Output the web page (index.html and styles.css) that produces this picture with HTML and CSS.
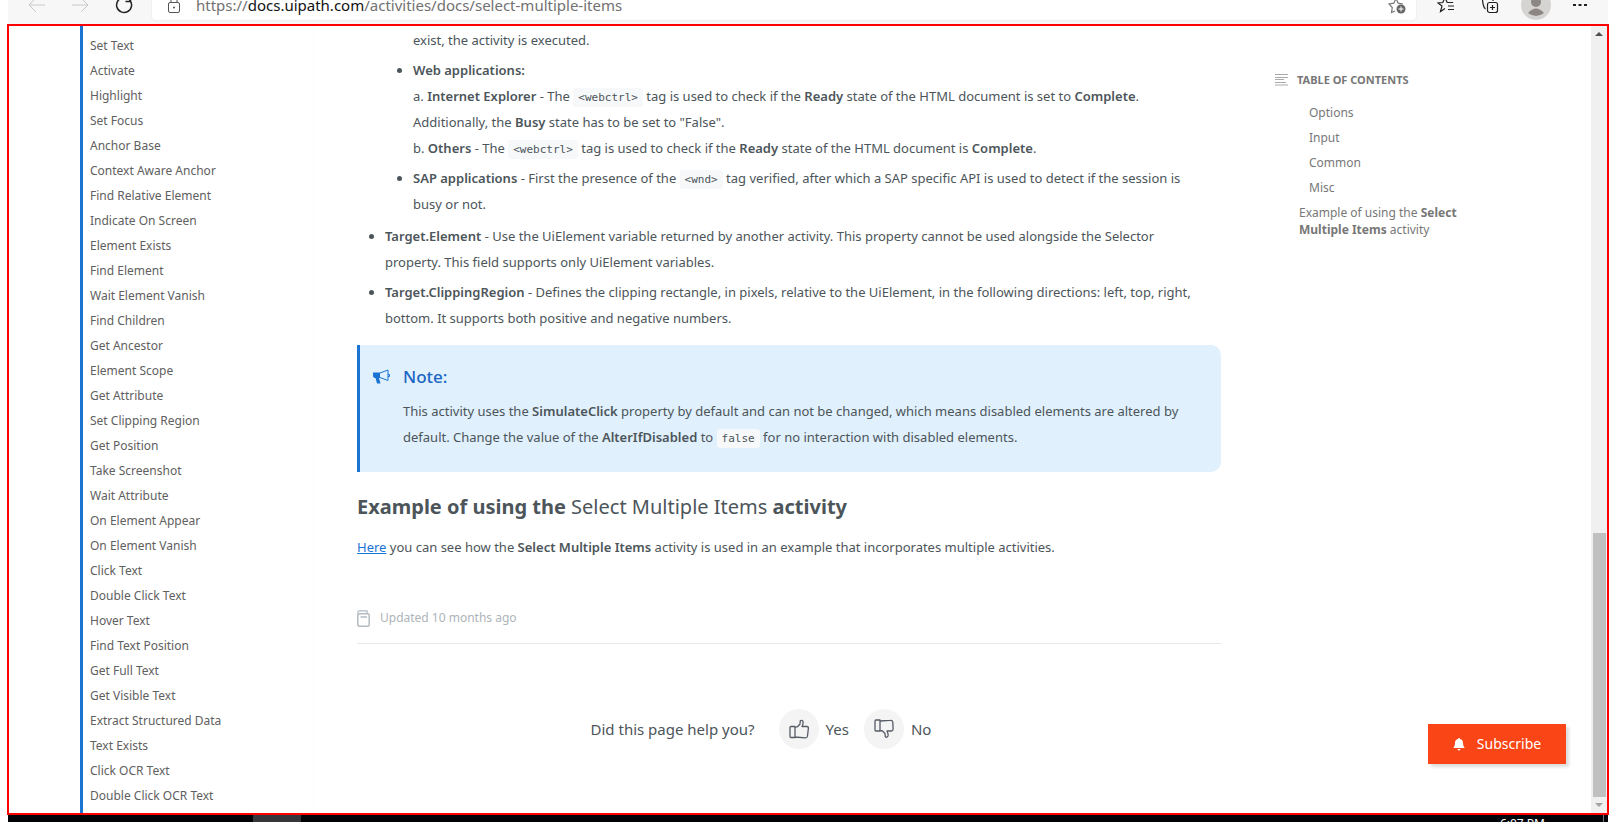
FILE: index.html
```html
<!DOCTYPE html>
<html lang="en">
<head>
<meta charset="utf-8">
<title>Select Multiple Items</title>
<link rel="stylesheet" href="styles.css">
</head>
<body>
<header class="toolbar">
  <div class="toolbar-row">
    <button class="tool" aria-label="Back"><svg width="18" height="16" viewBox="0 0 18 16"><path d="M17 8H1M8 1L1 8l7 7" stroke="#c8c8c8"/></svg></button>
    <button class="tool tool-forward" aria-label="Forward"><svg width="18" height="16" viewBox="0 0 18 16"><path d="M1 8h16M10 1l7 7-7 7" stroke="#c8c8c8"/></svg></button>
    <button class="tool tool-refresh" aria-label="Refresh"><svg width="18" height="18" viewBox="0 0 18 18"><path d="M14.500 3.800A7.500 7.500 0 1 1 9 1.500h1M10.500 5.500h5v-5" stroke="#222" stroke-width="1.500"/></svg></button>
    <div class="address">
      <svg class="lock" width="14" height="18" viewBox="0 0 14 18"><rect x="1.500" y="6.500" width="11" height="10" rx="1.500" stroke="#555"/><path d="M4 6.500V4a3 3 0 0 1 6 0v2.500" stroke="#555"/><circle cx="7" cy="11.500" r="1" fill="#555"/></svg>
      <span class="url">https://<b>docs.uipath.com</b>/activities/docs/select-multiple-items</span>
      <button class="tool" aria-label="Add to favorites"><svg width="18" height="18" viewBox="0 0 18 18"><path d="M7 15l-3.500 1.500.8-5L1 8l4.800-.8L8 2.500l2.200 4.700L15 8" stroke="#777" stroke-width="1.200"/><circle cx="13" cy="13" r="4.500" fill="#666"/><path d="M13 10.500v5M10.500 13h5" stroke="#fff"/></svg></button>
    </div>
    <div class="tools">
      <button class="tool favorites" aria-label="Favorites"><svg width="18" height="18" viewBox="0 0 18 18"><path d="M8 12.500l-4.500 3 1.500-5.500L1 7l4.800-.5L8 1.500l2.200 5h6M11 10h6M11 13.500h6" stroke="#222" stroke-width="1.200"/></svg></button>
      <button class="tool" aria-label="Collections"><svg width="18" height="18" viewBox="0 0 18 18"><rect x="6.500" y="6.500" width="10" height="10" rx="2" stroke="#222" stroke-width="1.200"/><path d="M11.500 9v5M9 11.500h5M4.500 13C2.500 12 1.500 6 1.500 3M4 3h8v2" stroke="#222" stroke-width="1.200"/></svg></button>
      <button class="tool avatar" aria-label="Profile"><svg width="30" height="30" viewBox="0 0 30 30"><circle cx="15" cy="15" r="15" fill="#d6d4d2"/><circle cx="15" cy="12" r="5" fill="#8c8785"/><path d="M7 23q8-9 16 0-8 6-16 0z" fill="#8c8785"/></svg></button>
      <button class="tool" aria-label="Settings and more"><svg width="14" height="4" viewBox="0 0 14 4"><path d="M0 1h3v2H0zM5.500 1h3v2h-3zM11 1h3v2h-3z" fill="#222"/></svg></button>
    </div>
  </div>
</header>

<div class="frame">
  <nav class="sidebar">
    <a href="#">Set Text</a><a href="#">Activate</a><a href="#">Highlight</a><a href="#">Set Focus</a><a href="#">Anchor Base</a><a href="#">Context Aware Anchor</a><a href="#">Find Relative Element</a><a href="#">Indicate On Screen</a><a href="#">Element Exists</a><a href="#">Find Element</a><a href="#">Wait Element Vanish</a><a href="#">Find Children</a><a href="#">Get Ancestor</a><a href="#">Element Scope</a><a href="#">Get Attribute</a><a href="#">Set Clipping Region</a><a href="#">Get Position</a><a href="#">Take Screenshot</a><a href="#">Wait Attribute</a><a href="#">On Element Appear</a><a href="#">On Element Vanish</a><a href="#">Click Text</a><a href="#">Double Click Text</a><a href="#">Hover Text</a><a href="#">Find Text Position</a><a href="#">Get Full Text</a><a href="#">Get Visible Text</a><a href="#">Extract Structured Data</a><a href="#">Text Exists</a><a href="#">Click OCR Text</a><a href="#">Double Click OCR Text</a>
  </nav>

  <main class="article">
    <ul class="list">
      <li class="continued">
        <ul class="list">
          <li class="continued">exist, the activity is executed.</li>
          <li><strong>Web applications:</strong><br>a. <strong>Internet Explorer</strong> - The <code>&lt;webctrl&gt;</code> tag is used to check if the <strong>Ready</strong> state of the HTML document is set to <strong>Complete</strong>.<br>Additionally, the <strong>Busy</strong> state has to be set to "False".<br>b. <strong>Others</strong> - The <code>&lt;webctrl&gt;</code> tag is used to check if the <strong>Ready</strong> state of the HTML document is <strong>Complete</strong>.</li>
          <li><strong>SAP applications</strong> - First the presence of the <code>&lt;wnd&gt;</code> tag verified, after which a SAP specific API is used to detect if the session is<br>busy or not.</li>
        </ul>
      </li>
      <li><strong>Target.Element</strong> - Use the UiElement variable returned by another activity. This property cannot be used alongside the Selector<br>property. This field supports only UiElement variables.</li>
      <li><strong>Target.ClippingRegion</strong> - Defines the clipping rectangle, in pixels, relative to the UiElement, in the following directions: left, top, right,<br>bottom. It supports both positive and negative numbers.</li>
    </ul>

    <aside class="note">
      <svg class="horn" width="17" height="15" viewBox="0 0 17 15"><path d="M0 3.500h7V9H6l1.500 5.500H4L2.500 9H1.500L0 7.500z" fill="#1a74d4"/><path d="M7 4l8-3v10.500L7 8.500M15 5.500h1.500v2H15" stroke="#1a74d4"/></svg>
      <div>
        <h3>Note:</h3>
        <p>This activity uses the <strong>SimulateClick</strong> property by default and can not be changed, which means disabled elements are altered by<br>default. Change the value of the <strong>AlterIfDisabled</strong> to <code>false</code> for no interaction with disabled elements.</p>
      </div>
    </aside>

    <h2>Example of using the <span>Select Multiple Items</span> activity</h2>
    <p class="text"><a href="#">Here</a> you can see how the <strong>Select Multiple Items</strong> activity is used in an example that incorporates multiple activities.</p>

    <div class="updated">
      <svg width="13" height="17" viewBox="0 0 13 17"><rect x=".8" y="3.800" width="11.400" height="12.400" rx="1.500" stroke="#b3bcc2" stroke-width="1.500"/><path d="M1 4.500V2q0-1.200 1.200-1.200H10V3.500M3.500 7h6.500" stroke="#b3bcc2" stroke-width="1.300"/></svg>
      <span>Updated 10 months ago</span>
    </div>

    <div class="feedback">
      <span class="question">Did this page help you?</span>
      <button class="vote"><span class="disc"><svg width="20" height="20" viewBox="0 0 20 20"><path d="M1 8.500q0-1 1-1h4v11H2q-1 0-1-1zM6 8.500l2.500-.8L11 5l.3-3.200q1.700-1.300 2.700.7.500 2-1 5h5q1.500.2 1.400 1.500L18.500 17q-.3 1.800-2 1.800L6 18" stroke="#565b66" stroke-width="1.300" stroke-linejoin="round"/></svg></span>Yes</button>
      <button class="vote"><span class="disc"><svg width="20" height="20" viewBox="0 0 20 20"><path d="M1 2q0-1 1-1h4v11H2q-1 0-1-1zM6 2l10-.6q2.500-.3 2.800 1.600l.3 7q0 1.800-1.700 2L13 12q1.500 3 1 5-1 2-2.700.8L11 14.500 8.500 12 6 11.500" stroke="#565b66" stroke-width="1.300" stroke-linejoin="round"/></svg></span>No</button>
    </div>
  </main>

  <nav class="toc">
    <h4><svg width="13" height="12" viewBox="0 0 13 12"><path d="M0 .5h13M0 3.500h13M0 5.500h9M0 8.500h11M0 11h13" stroke="#aaa"/></svg>TABLE OF CONTENTS</h4>
    <a class="sub" href="#">Options</a>
    <a class="sub" href="#">Input</a>
    <a class="sub" href="#">Common</a>
    <a class="sub" href="#">Misc</a>
    <a class="top" href="#">Example of using the <b>Select<br>Multiple Items</b> activity</a>
  </nav>

  <div class="scrollbar">
    <svg width="16" height="16" viewBox="0 0 16 16"><path d="M8 6l4 4H4z" fill="#505050"/></svg>
    <div class="track"><div class="thumb"></div></div>
    <svg width="16" height="16" viewBox="0 0 16 16"><path d="M8 10L4 6h8z" fill="#a3a3a3"/></svg>
  </div>

  <button class="subscribe"><svg width="12" height="13" viewBox="0 0 12 13"><path d="M6 0q1 0 1 1 3 .6 3 4 0 3.500 1.700 5H.3Q2 8.500 2 5q0-3.400 3-4 0-1 1-1zM4.500 11h3q-.3 1.500-1.500 1.500T4.500 11z" fill="#fff"/></svg>Subscribe</button>
</div>

<footer class="taskbar"><span class="task"></span><span class="clock">6:07 PM</span><span class="edge"></span></footer>
</body>
</html>
```
FILE: styles.css
```css
* { box-sizing: border-box; }
body {
  margin: 0;
  background: #fff;
  color: #4c555a;
  font: 13px/26px "Noto Sans", "Open Sans", sans-serif;
}
svg { fill: none; flex: none; display: block; }
button { border: 0; padding: 0; background: none; font: inherit; color: inherit; }
a { color: inherit; text-decoration: none; }
strong { font-weight: 600; }

.toolbar {
  display: flex;
  flex-direction: column;
  justify-content: flex-end;
  height: 24px;
  margin: 0 8px;
  padding-bottom: 4px;
  overflow: hidden;
  background: #f7f7f7;
}
.toolbar-row { display: flex; align-items: center; flex: none; height: 30px; padding-left: 20px; }
.tool-forward { margin-left: 25px; }
.tool-refresh { margin-left: 26px; }
.address {
  display: flex;
  align-items: center;
  flex: 1;
  height: 30px;
  margin-left: 19px;
  padding: 0 10px 0 15px;
  border-radius: 4px;
  background: #fff;
  box-shadow: 0 0 2px #ddd;
}
.url { flex: 1; margin-left: 15px; font-size: 15px; color: #717171; }
.url b { font-weight: 400; color: #111; }
.tools { display: flex; align-items: center; gap: 22px; padding: 0 21px; }
.favorites { margin-right: 4px; }

.frame {
  position: relative;
  display: flex;
  margin: 0 7px;
  border: 2px solid #f00;
}
.sidebar {
  display: flex;
  flex-direction: column;
  width: 234px;
  margin-left: 71px;
  padding: 7px 0 5px 7px;
  border-left: 3px solid #1a74d4;
  border-right: 1px solid #fcfcfc;
  color: #606060;
  font-size: 12px;
  line-height: 25px;
}
.article { flex: 1; margin: 0 54px 0 43px; padding-top: 1px; white-space: nowrap; }
.list { margin: 0; padding-left: 28px; list-style: disc; }
.list .list { margin-bottom: 6px; }
.list li { margin-bottom: 4px; }
.list li.continued { list-style: none; }
.list .list li:last-child { margin-bottom: 0; }
code {
  padding: 3px 5px;
  border-radius: 3px;
  background: #f6f8fa;
  font: 11px "DejaVu Sans Mono", monospace;
}
.note {
  display: flex;
  gap: 13px;
  margin-top: 14px;
  padding: 19px 12px 22px 13px;
  border-left: 3px solid #1a74d4;
  border-radius: 0 10px 10px 0;
  background: #e0f0fd;
}
.horn { margin-top: 5px; }
.note h3 { margin: 0 0 8px; color: #1a66c4; font-size: 17px; font-weight: 500; line-height: 26px; }
.note p { margin: 0; }
h2 { margin: 20px 0 12px; font-size: 20px; line-height: 30px; }
h2 span { font-weight: 400; }
.text { margin: 0; }
.text a { color: #1a74d4; text-decoration: underline; }
.updated {
  display: flex;
  align-items: center;
  gap: 10px;
  margin-top: 45px;
  padding-bottom: 12px;
  border-bottom: 1px solid #e6e8ea;
  color: #adb4b9;
  font-size: 12px;
}
.feedback {
  display: flex;
  align-items: center;
  justify-content: center;
  margin-top: 65px;
  padding-right: 56px;
  font-size: 15px;
}
.question { margin-right: 24px; }
.vote { display: flex; align-items: center; gap: 7px; margin-right: 15px; }
.vote:last-child { margin-right: 0; }
.disc {
  display: flex;
  align-items: center;
  justify-content: center;
  width: 40px;
  height: 40px;
  border-radius: 50%;
  background: #f4f4f4;
}
.toc { display: flex; flex-direction: column; width: 316px; padding-top: 41px; color: #777; font-size: 12px; line-height: 25px; }
.toc h4 { display: flex; align-items: center; gap: 9px; margin: 0 0 8px; font-size: 11px; line-height: 25px; }
.toc .sub { padding-left: 34px; }
.toc .top { margin-top: 4px; padding-left: 24px; line-height: 17px; }
.scrollbar { display: flex; flex-direction: column; width: 16px; background: #f0f0f0; }
.track { display: flex; flex-direction: column; justify-content: flex-end; flex: 1; padding: 0 1px 0 2px; }
.thumb { height: 35%; background: #c0c0c0; }
.subscribe {
  position: absolute;
  right: 41px;
  bottom: 49px;
  display: flex;
  align-items: center;
  justify-content: center;
  gap: 12px;
  width: 138px;
  height: 40px;
  background: #fa4616;
  box-shadow: 3px 3px 3px #ddd;
  color: #fff;
  font-size: 14px;
}
.taskbar { display: flex; height: 7px; margin: 0 8px; overflow: hidden; background: #020306; color: #fff; }
.task { width: 48px; margin-left: 245px; background: #35353a; }
.clock { margin-left: auto; padding-top: 2px; font-size: 12px; line-height: 14px; }
.edge { width: 1px; margin: 0 4px 0 58px; background: #777; }
```
